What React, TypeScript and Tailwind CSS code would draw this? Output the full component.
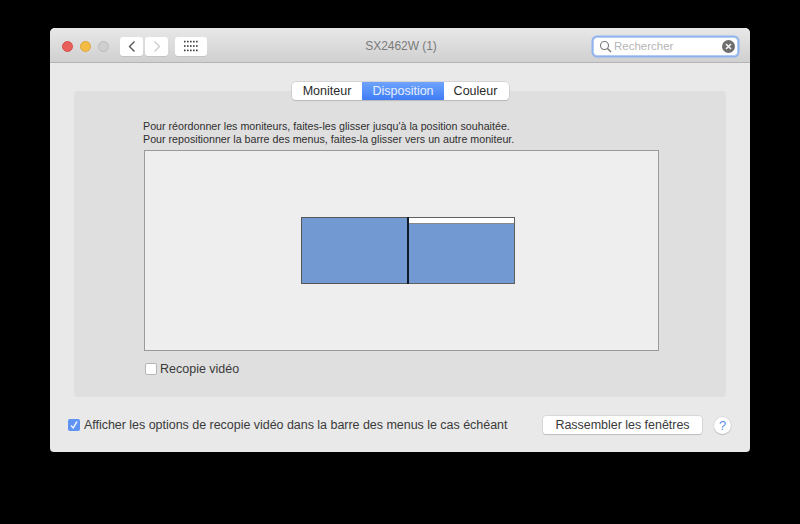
import React from "react";

const font = { fontFamily: '"Liberation Sans", Arial, sans-serif' };

const GridDots = () => (
  <svg width="14" height="12" viewBox="0 0 14 12" fill="#3a3a3a">
    {[0, 1, 2].map((r) =>
      [0, 1, 2, 3, 4].map((c) => (
        <rect key={`${r}-${c}`} x={c * 3} y={r * 4.4 + 0.8} width="1.6" height="1.6" />
      ))
    )}
  </svg>
);

const App = () => {
  return (
    <div
      style={font}
      className="w-[800px] h-[524px] bg-black pt-[28px] pl-[50px] overflow-hidden antialiased"
    >
      <div className="w-[700px] h-[424px] bg-[#e9e9e9] rounded-t-[5px] rounded-b-[4px] flex flex-col">
        {/* title bar */}
        <div className="h-[35px] shrink-0 flex items-center pt-[2px] pl-[12px] pr-[11px] rounded-t-[5px] bg-gradient-to-b from-[#e8e8e8] to-[#d0d0d0] border-b border-[#b4b4b4]">
          <div className="flex gap-[7px] w-[58px]">
            <div className="w-[11px] h-[11px] rounded-full bg-[#e85f5b] border border-[#d8504c]" />
            <div className="w-[11px] h-[11px] rounded-full bg-[#f2bc45] border border-[#dea73c]" />
            <div className="w-[11px] h-[11px] rounded-full bg-[#cfcfcf] border border-[#bcbcbc]" />
          </div>
          <div className="flex gap-[2px]">
            <div className="w-[23px] h-[19px] bg-white rounded-[3px] shadow-[0_1px_0_#c4c4c4] flex items-center justify-center">
              <svg width="10" height="13" viewBox="0 0 10 13" fill="none" stroke="#555" strokeWidth="1.4">
                <path d="M7.5 1.5 L2.5 6.5 L7.5 11.5" />
              </svg>
            </div>
            <div className="w-[23px] h-[19px] bg-white rounded-[3px] shadow-[0_1px_0_#c4c4c4] flex items-center justify-center">
              <svg width="10" height="13" viewBox="0 0 10 13" fill="none" stroke="#cdcdcd" strokeWidth="1.4">
                <path d="M2.5 1.5 L7.5 6.5 L2.5 11.5" />
              </svg>
            </div>
          </div>
          <div className="ml-[7px] w-[32px] h-[19px] bg-white rounded-[3px] shadow-[0_1px_0_#c4c4c4] flex items-center justify-center">
            <GridDots />
          </div>
          <div className="flex-1 text-center text-[12px] tracking-[-0.05px] text-[#7a7a7a] pl-[2px]">SX2462W (1)</div>
          <div className="mr-[1px] w-[145px] h-[19px] bg-white rounded-[4px] border border-[#b4cbf3] shadow-[0_0_0_1.5px_#8fb3ee] flex items-center pl-[5px] pr-[2px]">
            <svg width="13" height="13" viewBox="0 0 13 13" fill="none" stroke="#777" strokeWidth="1.1">
              <circle cx="5.5" cy="5.5" r="4" />
              <path d="M8.5 8.5 L12 12" strokeWidth="1.4" />
            </svg>
            <span className="ml-[2px] flex-1 text-[11.5px] leading-[17px] pt-px text-[#b5b5b5]">Rechercher</span>
            <svg width="13" height="13" viewBox="0 0 13 13">
              <circle cx="6.5" cy="6.5" r="6.5" fill="#6d6d6d" />
              <path d="M4 4 L9 9 M9 4 L4 9" stroke="#f2f2f2" strokeWidth="1.7" />
            </svg>
          </div>
        </div>

        {/* tabs + panel */}
        <div className="relative mt-[28px] mx-[24px] h-[306px] bg-[#dfdfdf] rounded-[4px] pl-[69px]">
          <div className="absolute top-[-9px] left-[218px] flex h-[18px] w-[217px] bg-white rounded-[4px] shadow-[0_0_0_0.5px_#c0c0c0,0_1px_1px_#b5b5b5] text-[12.5px] text-[#2a2a2a] overflow-hidden">
            <div className="w-[70px] flex items-center justify-center">Moniteur</div>
            <div className="w-[82px] flex items-center justify-center text-[#e8efff] bg-gradient-to-b from-[#6fa4fb] to-[#3f7cf6]">Disposition</div>
            <div className="flex-1 flex items-center justify-center pr-[2px]">Couleur</div>
          </div>

          <div className="pt-[29px] text-[10.7px] leading-[13px] text-[#2f2f2f]">
            <p>Pour réordonner les moniteurs, faites-les glisser jusqu'à la position souhaitée.</p>
            <p>Pour repositionner la barre des menus, faites-la glisser vers un autre moniteur.</p>
          </div>

          <div className="mt-[4px] ml-px w-[515px] h-[201px] bg-[#eeeeee] border border-[#9a9a9a] pt-[66px] pl-[156px]">
            <div className="flex h-[67px] w-[214px]">
              <div className="w-[106px] h-full bg-[#7299d2] border border-[#555] border-r-0" />
              <div className="w-[2px] h-full bg-[#111827]" />
              <div className="flex-1 h-full border border-[#5f5f5f] border-l-0 flex flex-col">
                <div className="h-[6px] bg-white border-b border-[#8a8a8a]" />
                <div className="flex-1 bg-[#7299d2]" />
              </div>
            </div>
          </div>

          <div className="mt-[9px] ml-[2px] flex items-center gap-[3px] text-[12.5px] text-[#3a3a3a]">
            <div className="w-[12px] h-[12px] bg-white rounded-[2px] border border-[#b5b5b5]" />
            <span>Recopie vidéo</span>
          </div>
        </div>

        {/* bottom row */}
        <div className="mt-[19px] pl-[18px] flex items-center text-[12.5px] tracking-[-0.03px] text-[#3a3a3a]">
          <div className="w-[12px] h-[12px] rounded-[2px] bg-[#5f93f3] flex items-center justify-center">
            <svg width="10" height="10" viewBox="0 0 10 10" fill="none" stroke="#e6efff" strokeWidth="1.5">
              <path d="M2 5.5 L4.2 8 L8 1.5" />
            </svg>
          </div>
          <span className="ml-[4px] w-[458px] whitespace-nowrap">
            Afficher les options de recopie vidéo dans la barre des menus le cas échéant
          </span>
          <div className="ml-[1px] w-[159px] h-[18px] bg-white rounded-[3px] shadow-[0_0_0_0.5px_#c8c8c8,0_1px_1px_#b5b5b5] flex items-center justify-center">
            Rassembler les fenêtres
          </div>
          <div className="ml-[12px] w-[17px] h-[17px] rounded-full bg-white shadow-[0_0_0_0.5px_#c8c8c8,0_1px_1px_#b5b5b5] flex items-center justify-center text-[13px] text-[#5d8fe8]">
            ?
          </div>
        </div>
      </div>
    </div>
  );
};

export default App;
